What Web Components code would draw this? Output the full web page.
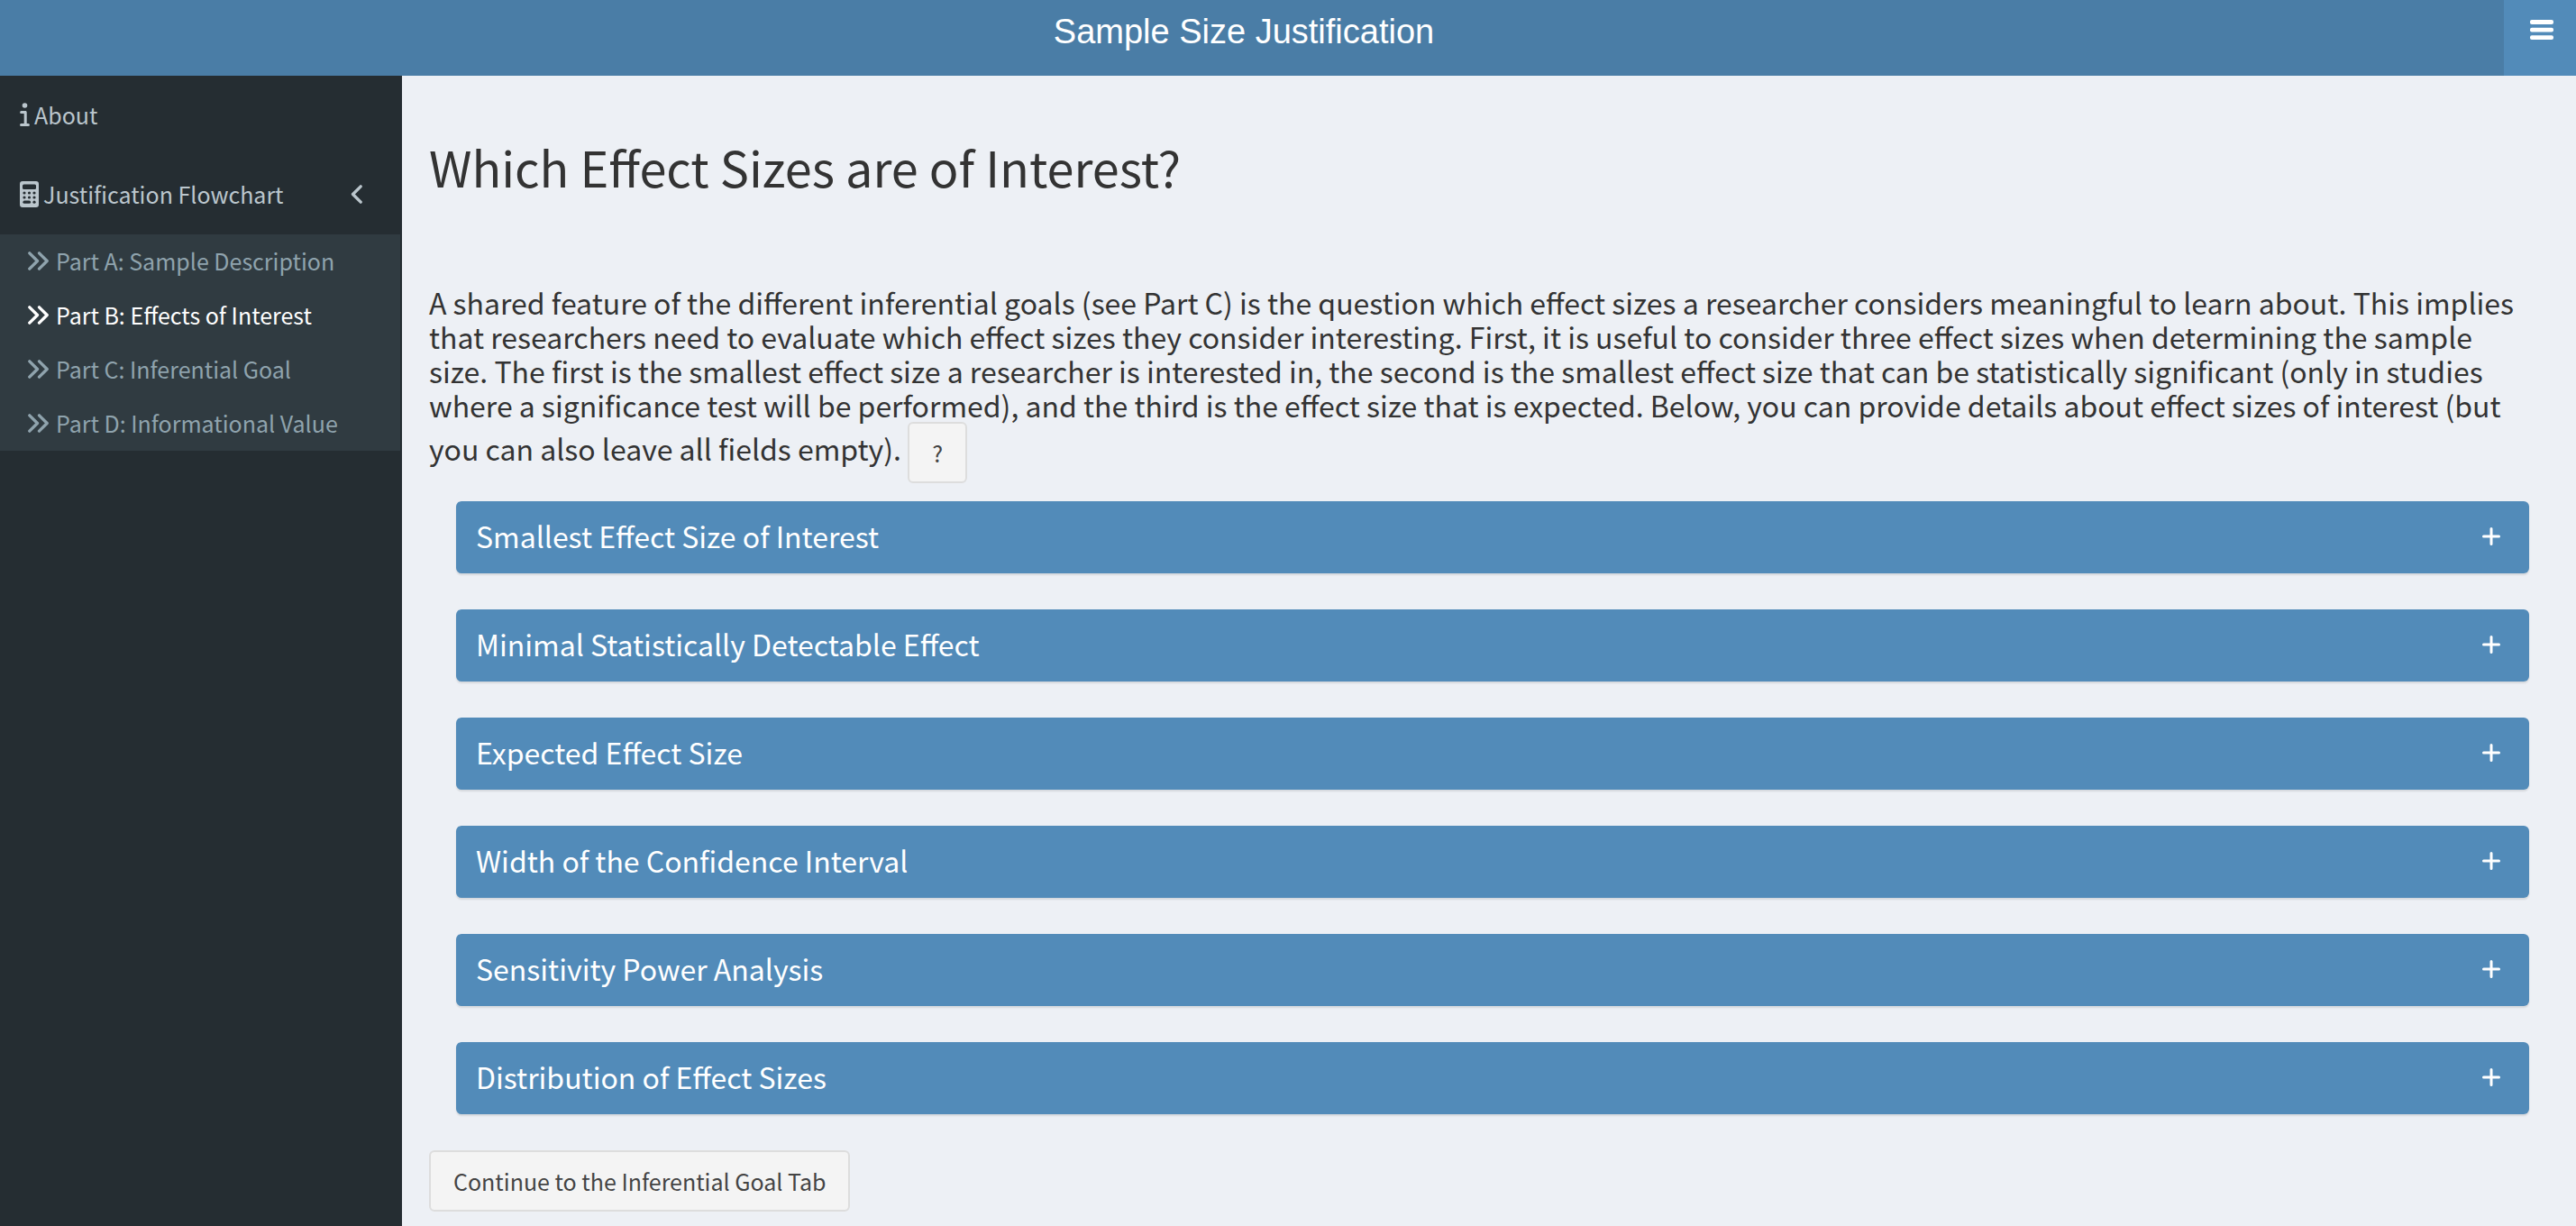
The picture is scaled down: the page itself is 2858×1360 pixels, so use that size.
<!DOCTYPE html>
<html lang="en">
<head>
<meta charset="utf-8">
<meta name="viewport" content="width=device-width, initial-scale=1">
<title>Sample Size Justification</title>
<style>
  body {
    margin: 0;
    font-family: "Noto Sans CJK SC", "Noto Sans", sans-serif;
    font-size: 25px;
    line-height: 40px;
    color: #333;
    background: #edf0f5;
  }
</style>
</head>
<body>
<ssj-app>
  <ssj-header slot="header">Sample Size Justification</ssj-header>
  <ssj-sidebar slot="sidebar">
    <ssj-nav-item icon="info">About</ssj-nav-item>
    <ssj-nav-item icon="calculator" expandable>Justification Flowchart</ssj-nav-item>
    <ssj-nav-item icon="angles" sub>Part A: Sample Description</ssj-nav-item>
    <ssj-nav-item icon="angles" sub active>Part B: Effects of Interest</ssj-nav-item>
    <ssj-nav-item icon="angles" sub>Part C: Inferential Goal</ssj-nav-item>
    <ssj-nav-item icon="angles" sub>Part D: Informational Value</ssj-nav-item>
  </ssj-sidebar>
  <ssj-intro heading="Which Effect Sizes are of Interest?">A shared feature of the different inferential goals (see Part C) is the question which effect sizes a researcher considers meaningful to learn about. This implies that researchers need to evaluate which effect sizes they consider interesting. First, it is useful to consider three effect sizes when determining the sample size. The first is the smallest effect size a researcher is interested in, the second is the smallest effect size that can be statistically significant (only in studies where a significance test will be performed), and the third is the effect size that is expected. Below, you can provide details about effect sizes of interest (but you can also leave all fields empty). <ssj-button>?</ssj-button></ssj-intro>
  <ssj-box-list>
    <ssj-box>Smallest Effect Size of Interest</ssj-box>
    <ssj-box>Minimal Statistically Detectable Effect</ssj-box>
    <ssj-box>Expected Effect Size</ssj-box>
    <ssj-box>Width of the Confidence Interval</ssj-box>
    <ssj-box>Sensitivity Power Analysis</ssj-box>
    <ssj-box>Distribution of Effect Sizes</ssj-box>
  </ssj-box-list>
  <ssj-button>Continue to the Inferential Goal Tab</ssj-button>
</ssj-app>

<script>
const define = (name, render) => customElements.define(name, class extends HTMLElement {
  constructor() {
    super();
    this.attachShadow({ mode: 'open' });
  }
  connectedCallback() {
    this.shadowRoot.innerHTML = render(this);
  }
});

const icons = {
  info: `<svg width="11" height="26" viewBox="0 0 11 26" fill="currentColor"><circle cx="5.5" cy="3" r="2.8"/><path d="M1.6 9h4.6c.9 0 1.5.6 1.5 1.5V23h1.7a1.4 1.4 0 0 1 0 3H1.5a1.4 1.4 0 0 1 0-3h3.2V12H1.6a1.5 1.5 0 0 1 0-3z"/></svg>`,
  calculator: `<svg width="21" height="29" viewBox="0 0 21 29" fill="currentColor"><path fill-rule="evenodd" d="M3 0h15a3 3 0 0 1 3 3v23a3 3 0 0 1-3 3H3a3 3 0 0 1-3-3V3a3 3 0 0 1 3-3zm1.5 3.5A1.5 1.5 0 0 0 3 5v2.500a1.500 1.500 0 0 0 1.500 1.500h12A1.500 1.500 0 0 0 18 7.500V5a1.500 1.500 0 0 0-1.500-1.500z"/><g fill="#252d32"><circle cx="5" cy="13" r="1.600"/><circle cx="10.500" cy="13" r="1.600"/><circle cx="16" cy="13" r="1.600"/><circle cx="5" cy="18" r="1.600"/><circle cx="10.500" cy="18" r="1.600"/><circle cx="16" cy="18" r="1.600"/><rect x="3.400" y="21.600" width="8.700" height="3.200" rx="1.600"/><circle cx="16" cy="23.200" r="1.600"/></g></svg>`,
  angles: `<svg width="23" height="21" viewBox="0 0 23 21" fill="none" stroke="currentColor" stroke-width="3.300" stroke-linecap="round" stroke-linejoin="round"><path d="M1.800 1.800l8.700 8.700-8.700 8.700M12.500 1.800l8.700 8.700-8.700 8.700"/></svg>`,
  angleLeft: `<svg width="13" height="21" viewBox="0 0 13 21" fill="none" stroke="currentColor" stroke-width="3.300" stroke-linecap="round" stroke-linejoin="round"><path d="M11.200 1.800l-8.700 8.700 8.700 8.700"/></svg>`,
  bars: `<svg width="26" height="22" viewBox="0 0 26 22" fill="currentColor"><rect y="0" width="26" height="5" rx="2"/><rect y="8.700" width="26" height="4.800" rx="2"/><rect y="17.300" width="26" height="4.700" rx="2"/></svg>`,
  plus: `<svg width="20" height="20" viewBox="0 0 20 20" fill="none" stroke="currentColor" stroke-width="3" stroke-linecap="round"><path d="M10 1.500v17M1.500 10h17"/></svg>`
};

define('ssj-app', () => `
  <style>
    :host { display: grid; grid-template: auto 1fr / 446px minmax(0, 1fr); min-height: 100vh; }
    header { grid-column: 1 / -1; }
    aside { background: #252d32; }
    main { padding: 68px 30px 16px; }
  </style>
  <header><slot name="header"></slot></header>
  <aside><slot name="sidebar"></slot></aside>
  <main><slot></slot></main>`);

define('ssj-header', () => `
  <style>
    :host { display: flex; height: 84px; background: #4a7da6; color: #fff; }
    .title { flex: 1; padding: 15px 18px 0 0; text-align: center;
      font: 300 38px/40px "Helvetica Neue", "Liberation Sans", Arial, sans-serif; }
    button { display: flex; justify-content: center; width: 80px; padding: 22px 0 0 4px; border: 0;
      background: #528bb9; color: inherit; cursor: pointer; }
  </style>
  <div class="title"><slot></slot></div>
  <button type="button" aria-label="Toggle controls">${icons.bars}</button>`);

define('ssj-sidebar', () => `
  <style>:host { display: block; padding-right: 2px; }</style>
  <nav><slot></slot></nav>`);

define('ssj-nav-item', el => `
  <style>
    :host { display: block; color: #bbc6cd; }
    :host([sub]) { background: #303b41; color: #8fa3ad; }
    :host([active]) { color: #fff; }
    a { display: flex; align-items: center; gap: 5px; padding: 23px 42px 25px 22px;
      color: inherit; text-decoration: none; }
    :host([sub]) a { gap: 8px; padding: 9px 10px 11px 31px; }
    .label { flex: 1; white-space: nowrap; }
  </style>
  <a href="#">${icons[el.getAttribute('icon')]}<span class="label"><slot></slot></span>${el.hasAttribute('expandable') ? icons.angleLeft : ''}</a>`);

define('ssj-intro', el => `
  <style>
    :host { display: block; }
    h2 { margin: 0 0 98px; font-size: 54px; line-height: 66px; font-weight: 400; }
    p { margin: 0 0 20px; padding-right: 24px; font-size: 32px; line-height: 38px; }
  </style>
  <h2>${el.getAttribute('heading')}</h2>
  <p><slot></slot></p>`);

define('ssj-button', () => `
  <style>
    :host { display: inline-block; vertical-align: middle; }
    button { display: block; padding: 12px 25px; border: 2px solid #ddd; border-radius: 6px;
      background: #f4f4f4; color: #444; font: inherit; font-size: 25px; line-height: 40px; cursor: pointer; }
  </style>
  <button type="button"><slot></slot></button>`);

define('ssj-box-list', () => `
  <style>
    :host { display: flex; flex-direction: column; gap: 40px; margin: 0 22px 40px 30px; }
  </style>
  <slot></slot>`);

define('ssj-box', () => `
  <style>
    :host { display: flex; align-items: center; justify-content: space-between; height: 80px;
      padding: 0 22px; border-radius: 6px; background: #528bb9; color: #fff;
      box-shadow: 0 2px 2px rgba(0, 0, 0, .1); }
    h3 { margin: 0; padding-bottom: 4px; font-size: 32px; line-height: 40px; font-weight: 400; }
    button { display: flex; padding: 9px 10px 11px; border: 0; background: none; color: inherit; cursor: pointer; }
  </style>
  <h3><slot></slot></h3>
  <button type="button" aria-label="Expand">${icons.plus}</button>`);
</script>
</body>
</html>
